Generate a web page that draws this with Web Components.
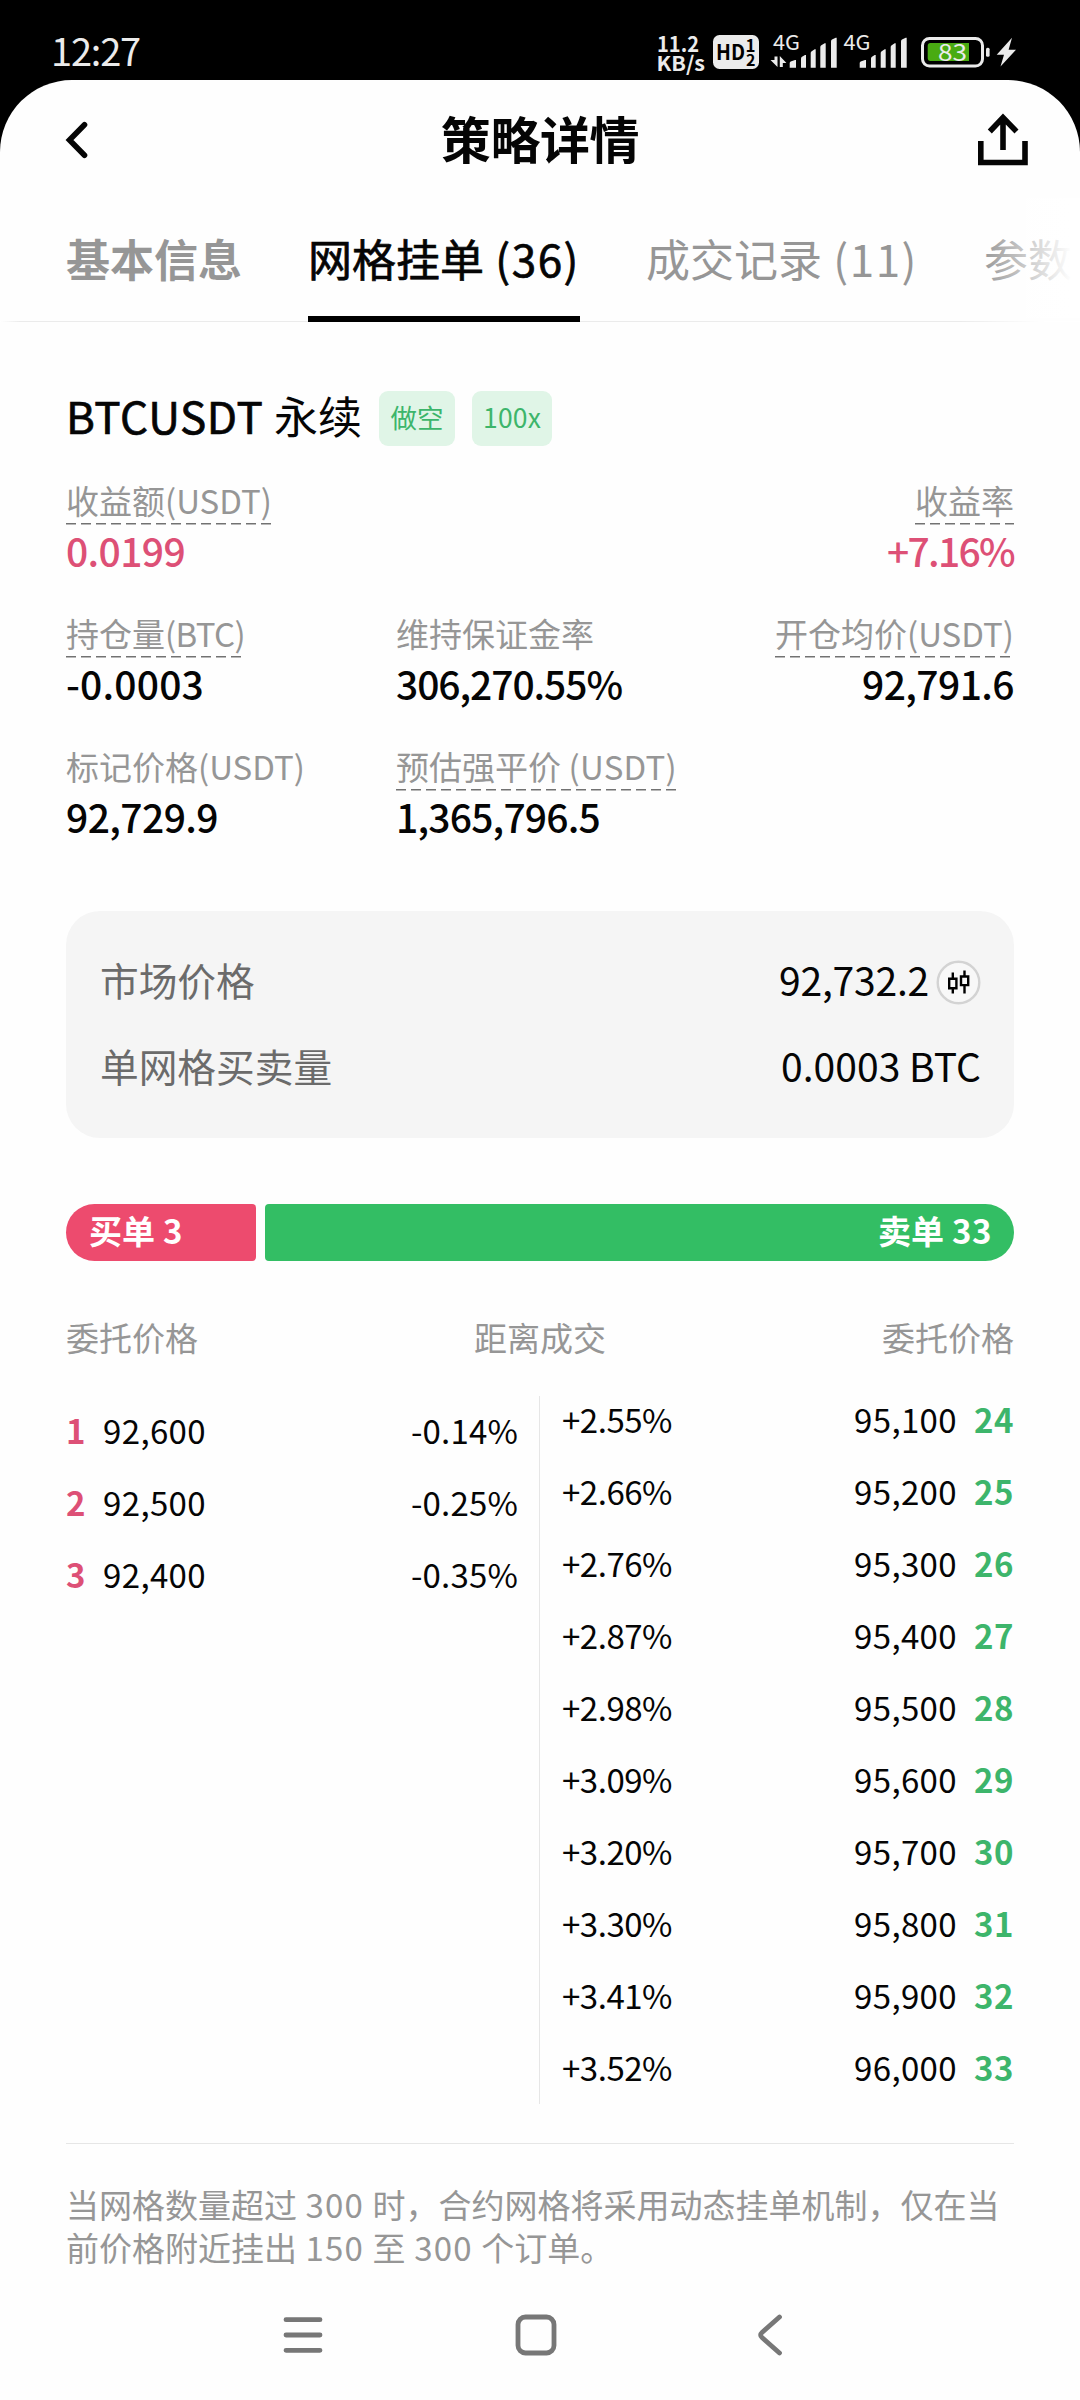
<!DOCTYPE html>
<html lang="zh-CN">
<head>
<meta charset="utf-8">
<title>策略详情</title>
<style>
html,body{margin:0;padding:0;background:#000}
body{width:1080px;height:2400px;overflow:hidden;font-family:"Noto Sans CJK SC",sans-serif;color:#050505;font-size:33px}
</style>
</head>
<body>
<strategy-page></strategy-page>
<script>
const define = (name, html, setup) => customElements.define(name, class extends HTMLElement {
  constructor() {
    super();
    this.attachShadow({ mode: 'open' }).innerHTML = typeof html === 'function' ? '' : html;
  }
  connectedCallback() {
    if (typeof html === 'function' && !this.ready) {
      this.ready = true;
      this.shadowRoot.innerHTML = html(this);
    }
    if (setup) setup(this);
  }
});

const bars = (xs) => [[120, 5], [105, 6], [88, 6], [70, 6], [53, 6]].map(([t, s], i) => {
  const y = 20 + t / 3, [a, b] = xs[i];
  return `<path d="M${a} ${y + s * .6}Q${a} ${y + s * .4} ${a + 1} ${y + s * .3}L${b - 1} ${y}H${b}V67.7H${a}Z"/>`;
}).join('');

define('status-bar', `
<style>
:host{display:flex;height:80px;background:#000;color:#ebebeb;padding:0 60px 0 51px;box-sizing:border-box;align-items:flex-start}
.time{font-size:38px;height:80px;padding-top:25px;box-sizing:border-box;line-height:50px;flex:1}
svg{display:block;height:80px;fill:#ebebeb;font-family:"Noto Sans CJK SC",sans-serif;flex:none}
</style>
<div class="time"><fit-text w="89">12:27</fit-text></div>
<svg viewBox="656 0 54 80" width="54" font-weight="700"><text x="657" y="52.4" font-size="21.5" textLength="42" lengthAdjust="spacingAndGlyphs">11.2</text><text x="656.5" y="70.8" font-size="20.5" textLength="48.5" lengthAdjust="spacingAndGlyphs">KB/s</text></svg>
<svg viewBox="710 0 54 80" width="54" font-weight="700"><rect x="713" y="35" width="46" height="34" rx="6.5"/><g fill="#000"><text x="716" y="60" font-size="21" textLength="29" lengthAdjust="spacingAndGlyphs">HD</text><text x="745.5" y="51.5" font-size="17">1</text><text x="746" y="65.5" font-size="16">2</text></g></svg>
<svg viewBox="764 0 76 80" width="76"><text x="773" y="50.2" font-size="20.5" textLength="27" lengthAdjust="spacingAndGlyphs">4G</text><path d="M774.5 56.5h3v10.5l-7-7h4zM779.8 67V56l6.6 7h-3.6v4z"/>${bars([[789.7,796],[801,806],[810.7,815.7],[820.3,825.7],[831,836.7]])}</svg>
<svg viewBox="840 0 74 80" width="74"><text x="843.5" y="50.2" font-size="20.5" textLength="27" lengthAdjust="spacingAndGlyphs">4G</text>${bars([[859.7,866],[871,875.7],[880.7,885.7],[890.7,895.7],[901,906.7]])}</svg>
<svg viewBox="914 0 79 80" width="79"><rect x="922.5" y="38.5" width="60" height="27.5" rx="7" fill="none" stroke="#ebebeb" stroke-width="3"/><path d="M930.5 43H969V61H930.5Q927.7 61 927.7 58V46Q927.7 43 930.5 43Z" fill="#49ab12"/><rect x="986" y="47.7" width="3.6" height="9" rx="1.5"/><text x="938" y="60.7" font-size="23" textLength="29" lengthAdjust="spacingAndGlyphs">83</text></svg>
<svg viewBox="993 0 27 80" width="27"><path d="M1012 37.7L996.7 54.8H1004L1000.5 66.5L1016 49.8H1008.6Z"/></svg>`);

define('page-header', `
<style>
:host{display:flex;height:118px;align-items:center;justify-content:space-between;padding:0 48px;box-sizing:border-box}
h1{margin:0;font-size:50px;font-weight:700;line-height:60px;padding-bottom:5px;letter-spacing:-.4px}
svg{display:block;fill:none;stroke:#050505;stroke-width:5.6}
</style>
<svg width="64" height="60" viewBox="49.5 109 64 60"><path d="M86 124.8L71 140L86 155.2" stroke-linecap="round"/></svg>
<h1><slot></slot></h1>
<svg width="64" height="60" viewBox="968 109 64 60"><path d="M980.8 141V162.5H1025V141M1003 150V117M989.8 131.5L1003 117.5L1016.5 131.5"/></svg>`);

define('tab-bar', `
<style>
:host{display:flex;gap:66px;height:124px;padding-left:66px;box-sizing:border-box;overflow:hidden;position:relative;white-space:nowrap;
background:linear-gradient(90deg,#fff 0,#ebebeb 20px,#ebebeb 960px,#fff 1045px) 0 123px/1080px 1px no-repeat}
:host::after{content:"";position:absolute;right:0;top:0;width:100px;height:120px;background:linear-gradient(90deg,#fff0,#fff 92%)}
</style><slot></slot>`);

define('tab-item', `
<style>
:host{display:flex;flex:none;flex-direction:column;font-size:44px;line-height:120px;color:#969696;height:124px}
div{height:118px}
:host([bold]){font-weight:700}
:host([active]){color:#050505;-webkit-text-stroke:.7px #050505}
i{height:6px;background:transparent}
:host([active]) i{background:#000}
</style><div><slot></slot></div><i></i>`);

define('tag-badge', `
<style>:host{display:flex;align-items:center;justify-content:center;height:55px;box-sizing:border-box;padding-bottom:4px;border-radius:9px;background:#e0f5e7;color:#3db56b;font-size:26.5px;line-height:40px}</style><slot></slot>`);

define('instrument-row', `
<style>
:host{display:flex;height:55px;margin-top:69px;align-items:center}
.name{font-size:44px;line-height:55px;padding-bottom:7px;display:flex}
.en{-webkit-text-stroke:.7px #050505}
.a{width:76px;margin-left:16px}.b{width:80px;margin-left:17px}
</style>
<div class="name"><fit-text class="en" w="208">BTCUSDT </fit-text><span>永续</span></div>
<tag-badge class="a" style="margin-left:17px">做空</tag-badge><tag-badge class="b"><fit-text w="58">100x</fit-text></tag-badge>`);

define('stat-cell', el => `
<style>
:host{display:flex;flex-direction:column;align-items:flex-start;height:98px;white-space:nowrap}
:host([end]){align-items:flex-end}
.l{font-size:33px;line-height:50px;height:50px;color:#969696;display:flex}
:host([dash]) .l{background:repeating-linear-gradient(90deg,#727272 0 10px,transparent 10px 15px) 0 48px/100% 1.5px no-repeat}
.v{font-size:39px;line-height:50px;font-weight:500}
:host([up]) .v{color:#dd5076}
</style>
<div class="l">${el.getAttribute('label')}${el.hasAttribute('unit') ? `<fit-text w="${el.getAttribute('uw')}">${el.getAttribute('unit')}</fit-text>` : ''}</div>
<div class="v"><fit-text w="${el.getAttribute('vw')}">${el.getAttribute('value')}</fit-text></div>`);

define('stat-grid', `
<style>:host{display:grid;grid-template-columns:330px 340px 1fr;row-gap:35px;margin-top:29px}</style>
<stat-cell dash up label="收益额" unit="(USDT)" uw="107" value="0.0199" vw="119"></stat-cell><span></span>
<stat-cell dash up end label="收益率" value="+7.16%" vw="127"></stat-cell>
<stat-cell dash label="持仓量" unit="(BTC)" uw="80" value="-0.0003" vw="138"></stat-cell>
<stat-cell label="维持保证金率" value="306,270.55%" vw="226"></stat-cell>
<stat-cell dash end label="开仓均价" unit="(USDT)" uw="107" value="92,791.6" vw="152"></stat-cell>
<stat-cell label="标记价格" unit="(USDT)" uw="107" value="92,729.9" vw="152"></stat-cell>
<stat-cell dash label="预估强平价" unit=" (USDT)" uw="116" value="1,365,796.5" vw="204"></stat-cell>`);

define('info-card', `
<style>
:host{display:block;height:227px;box-sizing:border-box;margin-top:72px;padding:25px 33px 0 34px;border-radius:34px;background:#f5f5f5;font-size:39px}
div{display:flex;height:86px;align-items:center;line-height:50px}
span{color:#6b6b6b;flex:1;font-size:38.7px}
svg{display:block;margin:6px 0 0 7px}
</style>
<div><span>市场价格</span><fit-text w="150">92,732.2</fit-text><svg width="45" height="45" viewBox="936.5 959.5 45 45" fill="none"><circle cx="959" cy="982" r="20.8" fill="#f8f8f8" stroke="#d3d3d3" stroke-width="2.4"/><path d="M949.7 978.3h7.2v9.4h-7.2zM953.3 972v6M953.3 988v5M961.5 976h7.2v8.6h-7.2zM965 970v6M965 985v8" stroke="#000" stroke-width="2.4"/></svg></div>
<div><span>单网格买卖量</span><fit-text w="200">0.0003 BTC</fit-text></div>`);

define('ratio-bar', `
<style>
:host{display:flex;gap:9px;height:57px;margin-top:66px;color:#fff;font-weight:700;font-size:33px;line-height:53px}
div{box-sizing:border-box;white-space:nowrap}
.buy{width:190px;background:#ed4b6e;border-radius:29px 4px 4px 29px;padding-left:23px}
.sell{flex:1;background:#33be64;border-radius:4px 29px 29px 4px;padding-right:22px;text-align:right}
</style>
<div class="buy">买单<fit-text w="28"> 3</fit-text></div><div class="sell">卖单<fit-text w="48"> 33</fit-text></div>`);

define('order-row', el => {
  const [n, price, pct] = ['n', 'price', 'pct'].map(k => el.getAttribute(k));
  const sell = el.hasAttribute('sell');
  const num = `<b><fit-text w="${sell ? 40 : 20}">${n}</fit-text></b>`;
  const p = `<fit-text w="103">${price}</fit-text>`;
  const c = `<fit-text w="${sell ? 110 : 107}">${pct}</fit-text>`;
  return `<style>
:host{display:flex;height:44px;line-height:45px;justify-content:space-between}
div{display:flex;gap:17px}
b{color:${sell ? '#3db56b' : '#dd5076'}}
</style>${sell ? `${c}<div>${p}${num}</div>` : `<div>${num}${p}</div>${c}`}`;
});

const buys = [['1', '92,600', '-0.14%'], ['2', '92,500', '-0.25%'], ['3', '92,400', '-0.35%']];
const sells = ['2.55', '2.66', '2.76', '2.87', '2.98', '3.09', '3.20', '3.30', '3.41', '3.52']
  .map((p, i) => [24 + i, (95100 + i * 100).toLocaleString('en-US'), `+${p}%`]);
const rows = (list, kind) => list.map(([n, price, pct]) => `<order-row ${kind} n="${n}" price="${price}" pct="${pct}"></order-row>`).join('');

define('order-book', `
<style>
:host{display:block;margin-top:55px}
.head{display:flex;justify-content:space-between;height:40px;line-height:42px;color:#969696}
.book{display:flex;height:708px;margin-top:40px}
.col{display:flex;flex-direction:column;gap:28px;box-sizing:border-box}
.buy{width:473px;padding:12px 21px 0 0}
.line{width:1px;background:#e6e6e6}
.sell{flex:1;padding:1px 0 0 22px}
</style>
<div class="head"><span>委托价格</span><span>距离成交</span><span>委托价格</span></div>
<div class="book"><div class="col buy">${rows(buys, 'buy')}</div><div class="line"></div><div class="col sell">${rows(sells, 'sell')}</div></div>`);

define('foot-note', `
<style>
:host{display:block;margin-top:39px;border-top:1px solid #e6e6e6;padding-top:39px;line-height:43px;height:86px;color:#969696;white-space:nowrap}
p{margin:0;display:flex}
</style>
<p>当网格数量超过<fit-text w="75.6"> 300 </fit-text>时，合约网格将采用动态挂单机制，仅在当</p>
<p>前价格附近挂出<fit-text w="75.6"> 150 </fit-text>至<fit-text w="75.6"> 300 </fit-text>个订单。</p>`);

define('nav-bar', `
<style>
:host{display:flex;height:130px;align-items:center;gap:187px;padding-left:280px;margin-top:1px}
svg{display:block;fill:none;stroke:#777;stroke-width:4.8;stroke-linecap:round;stroke-linejoin:round}
</style>
<svg width="46" height="46" viewBox="-23 -23 46 46"><path d="M-17 -15.3H17M-17 0H17M-17 15.3H17"/></svg>
<svg width="46" height="46" viewBox="-23 -23 46 46"><rect x="-18" y="-18" width="36" height="36" rx="7.5"/></svg>
<svg width="46" height="46" viewBox="-23 -23 46 46"><path d="M10.5 -18L-7 -2.5Q-9.8 0 -7 2.5L10.5 18"/></svg>`);

define('strategy-page', `
<style>
:host{display:block;width:1080px;height:2400px;background:#000}
main{background:#fefefe;border-radius:72px 72px 0 0;height:2320px;overflow:hidden}
section{padding:0 66px}
</style>
<status-bar></status-bar>
<main>
<page-header>策略详情</page-header>
<tab-bar><tab-item bold>基本信息</tab-item><tab-item active>网格挂单<fit-text w="96"> (36)</fit-text></tab-item><tab-item>成交记录<fit-text w="96"> (11)</fit-text></tab-item><tab-item>参数</tab-item></tab-bar>
<section>
<instrument-row></instrument-row>
<stat-grid></stat-grid>
<info-card></info-card>
<ratio-bar></ratio-bar>
<order-book></order-book>
<foot-note></foot-note>
</section>
<nav-bar></nav-bar>
</main>`);

/* Spreads its text evenly so that it fills the width given in "w". */
define('fit-text', '<style>:host{display:inline-block;white-space:pre;text-align:left}</style><slot></slot>', el => {
  const w = +el.getAttribute('w');
  el.style.width = '';
  el.style.letterSpacing = '0';
  const natural = el.getBoundingClientRect().width;
  el.style.letterSpacing = (w - natural) / el.textContent.length + 'px';
  el.style.width = w + 'px';
});
</script>
</body>
</html>
